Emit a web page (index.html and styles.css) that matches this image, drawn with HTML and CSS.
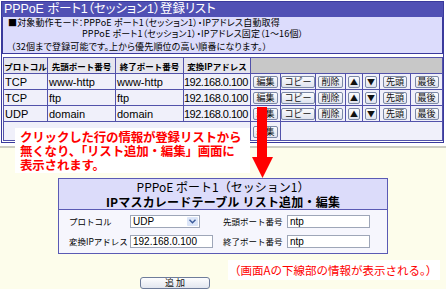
FILE: index.html
```html
<!DOCTYPE html>
<html lang="ja"><head><meta charset="utf-8"/>
<link rel="stylesheet" href="styles.css">
<title>IPマスカレード 登録リスト</title></head>
<body>
<div class="shot-a">
 <div class="panel">
  <div class="title">PPPoE ポート1（セッション1）登録リスト</div>
  <div class="info">
   <p>■対象動作モード：PPPoE ポート1（セッション1）・IPアドレス自動取得</p>
   <p class="indent">PPPoE ポート1（セッション1）・IPアドレス固定（1～16個）</p>
   <p class="hint">（32個まで登録可能です。上から優先順位の高い順番になります。）</p>
  </div>
  <table class="list">
   <colgroup><col class="c-proto"><col class="c-port"><col class="c-port"><col class="c-ip"><col class="c-edit"><col class="c-copy"><col class="c-del"><col class="c-up"><col class="c-up"><col class="c-top"><col class="c-last"></colgroup>
   <tr class="head"><th>プロトコル</th><th>先頭ポート番号</th><th>終了ポート番号</th><th>変換IPアドレス</th><th colspan="7"></th></tr>
   <tr><td>TCP</td><td>www-http</td><td>www-http</td><td class="ip">192.168.0.100</td>
    <td class="b"><button class="btn">編集</button></td><td class="b"><button class="btn">コピー</button></td><td class="b"><button class="btn">削除</button></td><td class="b"><button class="btn tri">▲</button></td><td class="b"><button class="btn tri">▼</button></td><td class="b"><button class="btn">先頭</button></td><td class="b"><button class="btn">最後</button></td></tr>
   <tr><td>TCP</td><td>ftp</td><td>ftp</td><td class="ip">192.168.0.100</td>
    <td class="b"><button class="btn">編集</button></td><td class="b"><button class="btn">コピー</button></td><td class="b"><button class="btn">削除</button></td><td class="b"><button class="btn tri">▲</button></td><td class="b"><button class="btn tri">▼</button></td><td class="b"><button class="btn">先頭</button></td><td class="b"><button class="btn">最後</button></td></tr>
   <tr><td>UDP</td><td>domain</td><td>domain</td><td class="ip">192.168.0.100</td>
    <td class="b"><button class="btn">編集</button></td><td class="b"><button class="btn">コピー</button></td><td class="b"><button class="btn">削除</button></td><td class="b"><button class="btn tri">▲</button></td><td class="b"><button class="btn tri">▼</button></td><td class="b"><button class="btn">先頭</button></td><td class="b"><button class="btn">最後</button></td></tr>
   <tr class="last"><td colspan="4"></td><td class="b"><button class="btn">編集</button></td><td colspan="6"></td></tr>
  </table>
 </div>
</div>

<div class="callout">クリックした行の情報が登録リストから<br>無くなり、「リスト追加・編集」画面に<br>表示されます。</div>
<svg class="arrow" width="21" height="72" viewBox="0 0 21 72"><rect x="5" y="0" width="10" height="51" fill="#f00"/><polygon points="0,50 21,50 10.5,71" fill="#f00"/></svg>

<div class="edit">
 <div class="edit-head">
  <p>PPPoE ポート1（セッション1）</p>
  <p class="strong">IPマスカレードテーブル リスト追加・編集</p>
 </div>
 <div class="edit-body">
  <span class="lbl">プロトコル</span>
  <div class="select">UDP<span class="drop"><svg width="7" height="5" viewBox="0 0 7 5"><path d="M0.5 0.8 L3.5 3.8 L6.5 0.8" fill="none" stroke="#3a5a9a" stroke-width="1.4"/></svg></span></div>
  <span class="lbl">先頭ポート番号</span>
  <div class="field">ntp</div>
  <span class="lbl">変換IPアドレス</span>
  <div class="field">192.168.0.100</div>
  <span class="lbl">終了ポート番号</span>
  <div class="field">ntp</div>
 </div>
</div>
<button class="add">追 加</button>
<div class="note">（画面Aの下線部の情報が表示される。）</div>
</body></html>
```

FILE: styles.css
```css
* { margin:0; padding:0; box-sizing:border-box; }
body { width:446px; height:289px; overflow:hidden; position:relative; background:#fdfdeb; font-family:"Liberation Sans","Noto Sans CJK JP",sans-serif; color:#000; }

.shot-a { background:#fff; height:148px; border-bottom:2px solid #cdcdc2; padding:1px 0 0 1px; }
.panel { width:443px; border:1px solid #3a3a9c; background:#fff; padding-bottom:1px; }
.title { background:#5050b4; color:#fff; height:15px; font-size:12.5px; line-height:15px; padding-left:2px; font-feature-settings:"palt"; letter-spacing:-0.1px; }
.info { background:#dcdcfc; height:37px; border:1px solid #3a3a9c; border-top:0; padding:1px 0 0 5px; font-size:9px; line-height:10.5px; font-family:"Noto Sans CJK JP",sans-serif; font-feature-settings:"palt"; letter-spacing:0.15px; white-space:nowrap; }
.info .indent { padding-left:74px; }
.info .hint { margin-top:2.5px; padding-left:3px; }

.list { margin:3px 0 0 1px; width:440px; table-layout:fixed; border-collapse:collapse; border:1px solid #3a3a9c; font-size:11px; }
.list td, .list th { border:1px solid #5252aa; height:16px; padding:0 1px; white-space:nowrap; overflow:hidden; background:#f0f0fa; text-align:left; font-weight:normal; }
.list td.ip { letter-spacing:-0.5px; padding:0; }
.list .head th { background:#e6e6ee; font-family:"Noto Sans CJK JP",sans-serif; font-weight:bold; font-size:8.5px; letter-spacing:0; padding:0; text-align:center; }
.list .head th[colspan] { background:repeating-conic-gradient(#bcbcbc 0 25%, #d4d4d4 0 50%) 0 0/2px 2px; }
.list .last td { height:19px; }
.c-proto { width:44px; } .c-port { width:68px; } .c-ip { width:67px; }
.c-edit { width:30px; } .c-copy { width:35px; } .c-del { width:30px; } .c-up { width:17px; } .c-top { width:31px; } .c-last { width:32px; }
.list td.b { text-align:center; padding:0; }

.btn { display:inline-block; height:12px; padding:0 2px; border:1px solid #7b88a6; border-radius:2px; background:linear-gradient(#fbfcfe,#dfe3ee); font-family:"Noto Sans CJK JP",sans-serif; font-size:9px; line-height:10px; color:#111; vertical-align:middle; }
.btn.tri { padding:0 1px; font-size:8px; }

.callout { position:absolute; left:15px; top:128px; width:235px; height:45px; background:#fff; padding:2px 0 0 5px; color:#f00; font-family:"Noto Sans CJK JP",sans-serif; font-weight:bold; font-size:12.5px; line-height:14px; letter-spacing:-0.2px; }
.arrow { position:absolute; left:252px; top:107px; }

.edit { margin:30px 0 0 58px; width:330px; border:1px solid #5a5ab4; background:#f6f6fd; }
.edit-head { height:31px; background:#dcdcfa; border-bottom:1px solid #5a5ab4; text-align:center; font-family:"Noto Sans CJK JP",sans-serif; font-size:12px; line-height:15px; }
.edit-head .strong { font-weight:bold; font-size:12px; letter-spacing:0.2px; }
.edit-body { display:grid; grid-template-columns:61px 93px 64px 83px; grid-template-rows:13px 13px; row-gap:7px; align-items:center; padding:5px 0 0 10px; height:43px; }
.lbl { font-family:"Noto Sans CJK JP",sans-serif; font-size:8.5px; line-height:13px; white-space:nowrap; }
.field, .select { height:13px; border:1px solid #9ea6b8; background:#fff; font-size:10px; line-height:11px; padding-left:2px; }
.field { width:83px; }
.select { width:70px; display:flex; justify-content:space-between; align-items:center; padding-right:1px; }
.drop { display:flex; align-items:center; justify-content:center; width:11px; height:9px; background:#dbe5f8; border-radius:1px; }

.add { display:block; margin:23px 0 0 140px; width:70px; height:12px; border:1px solid #6e7c9a; border-radius:3px; background:linear-gradient(#fdfdfe,#e2e6ef); font-family:"Noto Sans CJK JP",sans-serif; font-size:9px; line-height:10px; color:#111; }
.note { position:absolute; left:228px; top:260px; width:212px; height:20px; background:#fff; color:#f00; font-family:"Noto Sans CJK JP",sans-serif; font-size:11.5px; line-height:20px; padding-left:1px; }
```
